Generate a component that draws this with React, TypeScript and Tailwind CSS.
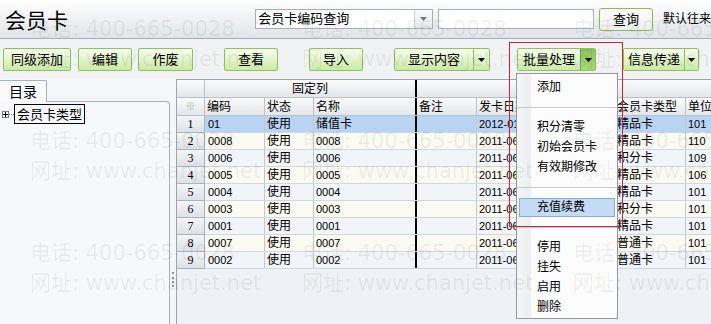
import React from "react";

const UI = "font-['Liberation_Sans','Noto_Sans_CJK_SC',sans-serif]";

const rows = [
  ["1", "01", "使用", "储值卡", "", "2012-01-10", "精品卡", "101"],
  ["2", "0008", "使用", "0008", "", "2011-06-01", "精品卡", "110"],
  ["3", "0006", "使用", "0006", "", "2011-06-01", "积分卡", "109"],
  ["4", "0005", "使用", "0005", "", "2011-06-01", "精品卡", "106"],
  ["5", "0004", "使用", "0004", "", "2011-06-01", "精品卡", "101"],
  ["6", "0003", "使用", "0003", "", "2011-06-01", "积分卡", "101"],
  ["7", "0001", "使用", "0001", "", "2011-06-01", "精品卡", "101"],
  ["8", "0007", "使用", "0007", "", "2011-06-01", "普通卡", "101"],
  ["9", "0002", "使用", "0002", "", "2011-06-01", "普通卡", "101"],
];

function Tri({ color = "#000" }: { color?: string }) {
  return (
    <svg width="7" height="4" viewBox="0 0 7 4">
      <polygon points="0,0 7,0 3.5,4" fill={color} />
    </svg>
  );
}

function GBtn({ children, cls }: { children: React.ReactNode; cls: string }) {
  return (
    <div
      className={
        "h-[23px] flex items-center justify-center rounded-[2px] border border-[#8cc25f] bg-linear-to-b from-[#f8fdf1] to-[#cbeaa2] text-[13px] leading-none " +
        cls
      }
    >
      {children}
    </div>
  );
}

function SplitBtn({
  label,
  mainW,
  arrowW,
  ml,
  pressed,
}: {
  label: string;
  mainW: string;
  arrowW: string;
  ml: string;
  pressed?: boolean;
}) {
  return (
    <div className={"flex h-[23px] rounded-[2px] border border-[#8cc25f] text-[13px] leading-none " + ml}>
      <div className={"flex items-center justify-center bg-linear-to-b from-[#f8fdf1] to-[#cbeaa2] " + mainW}>{label}</div>
      {pressed ? (
        <div className={"flex items-center justify-center border-l border-[#6fa845] bg-linear-to-b from-[#8cc45a] to-[#a9d87a] " + arrowW}>
          <Tri />
        </div>
      ) : (
        <div className={"flex items-center justify-center border-l border-[#8cc25f] bg-linear-to-b from-[#f8fdf1] to-[#cbeaa2] " + arrowW}>
          <Tri />
        </div>
      )}
    </div>
  );
}

function MenuItem({ children }: { children: React.ReactNode }) {
  return <div className="h-[20px] flex items-center pl-[20px] text-[12px] leading-none">{children}</div>;
}

function MenuSep() {
  return (
    <div className="h-[20px] flex items-center">
      <div className="h-px w-full bg-[#c9c9c9]" />
    </div>
  );
}

function Watermark() {
  const cell = (
    <div className="h-[112px] flex flex-col">
      <div className="h-[30px] leading-[30px] whitespace-nowrap">电话: 400-665-0028</div>
      <div className="h-[30px] leading-[30px] whitespace-nowrap">网址: www.chanjet.net</div>
    </div>
  );
  return (
    <div className="absolute inset-0 pointer-events-none pl-[30px] pt-[14px] grid grid-cols-[272px_271px_271px] text-[21px] text-black/[0.065] font-['DejaVu_Sans','Noto_Sans_CJK_SC',sans-serif]">
      {cell}
      {cell}
      {cell}
      {cell}
      {cell}
      {cell}
      {cell}
      {cell}
      {cell}
    </div>
  );
}

export default function App() {
  return (
    <div className={"relative w-[711px] h-[324px] overflow-hidden bg-[#f4f6f8] text-black flex flex-col " + UI}>
      {/* Title bar */}
      <div className="h-[39px] shrink-0 flex items-center border-b border-[#a3afba] bg-linear-to-b from-white to-[#e0e4e8]">
        <div className="pl-[5px] w-[256px] text-[21px] leading-none font-['Noto_Sans_CJK_SC',sans-serif]">会员卡</div>
        <div className="flex h-[20px] w-[178px] border border-[#a7aeb6] bg-white">
          <div className="flex-1 text-[13px] leading-[18px] pl-[2px]">会员卡编码查询</div>
          <div className="w-[18px] border-l border-[#cfd3d8] bg-linear-to-b from-[#fbfbfb] to-[#e5e7e9] flex items-center justify-center">
            <Tri color="#777" />
          </div>
        </div>
        <div className="ml-[5px] h-[20px] w-[157px] border border-[#a7aeb6] bg-white" />
        <div className="ml-[5px] h-[23px] w-[54px] rounded-[3px] border border-[#86bd5b] bg-linear-to-b from-white to-[#eceee9] flex items-center justify-center text-[13px] leading-none">
          查询
        </div>
        <div className="ml-[10px] text-[12px] whitespace-nowrap">默认往来</div>
      </div>

      {/* Toolbar */}
      <div className="h-[40px] shrink-0 flex items-start pt-[9px] bg-[#f1f2f4]">
        <GBtn cls="w-[68px] ml-[3px]">同级添加</GBtn>
        <GBtn cls="w-[54px] ml-[7px]">编辑</GBtn>
        <GBtn cls="w-[55px] ml-[6px]">作废</GBtn>
        <GBtn cls="w-[54px] ml-[31px]">查看</GBtn>
        <GBtn cls="w-[54px] ml-[31px]">导入</GBtn>
        <SplitBtn label="显示内容" mainW="w-[78px]" arrowW="w-[16px]" ml="ml-[31px]" />
        <SplitBtn label="批量处理" mainW="w-[62px]" arrowW="w-[15px]" ml="ml-[27px]" pressed />
        <SplitBtn label="信息传递" mainW="w-[60px]" arrowW="w-[14px]" ml="ml-[27px]" />
      </div>

      {/* Content */}
      <div className="flex flex-1 min-h-0">
        {/* Left panel */}
        <div className="w-[170px] shrink-0 flex flex-col pt-[1px]">
          <div className="relative z-10 w-[47px] h-[22px] -mb-px border-t border-r border-[#a9b1ba] rounded-tr-[2px] bg-[#f9fafb] flex items-center justify-center text-[14px] leading-none">
            目录
          </div>
          <div className="flex-1 border-t border-r border-[#a9b1ba] rounded-tr-[4px] bg-[#f7f8fa] pt-[2px]">
            <div className="flex items-center h-[20px]">
              <div className="ml-[2px] w-[7px] h-[7px] border border-[#7d7d7d] bg-white flex items-center justify-center relative">
                <div className="absolute w-[5px] h-px bg-black" />
                <div className="absolute w-px h-[5px] bg-black" />
              </div>
              <div className="w-[5px] border-t border-dotted border-[#888]" />
              <div className="h-[20px] border border-black px-[2px] flex items-center text-[13px] leading-none">会员卡类型</div>
            </div>
          </div>
        </div>

        {/* Splitter */}
        <div className="w-[6px] shrink-0 flex flex-col items-center pt-[193px]">
          <div className="h-[15px] border-l-2 border-dotted border-[#8a9097]" />
        </div>

        {/* Grid */}
        <div className="flex-1 border-l border-t border-[#9ca5ae] bg-[#eef1f5] flex flex-col text-[12px] leading-none">
          {/* header row 1 */}
          <div className="h-[18px] flex border-b border-[#b9c0c8] bg-linear-to-b from-[#fbfbfc] to-[#e3e6ea]">
            <div className="w-[28px] border-r border-[#b9c0c8]" />
            <div className="w-[212px] border-r-2 border-black flex items-center justify-center">固定列</div>
            <div className="flex-1" />
          </div>
          {/* header row 2 */}
          <div className="h-[18px] flex border-b border-[#b9c0c8] bg-linear-to-b from-[#fbfbfc] to-[#e3e6ea]">
            <div className="w-[28px] border-r border-[#b9c0c8] flex items-center justify-center text-[#aaa] text-[10px]">※</div>
            <div className="w-[60px] border-r border-[#b9c0c8] flex items-center pl-[2px]">编码</div>
            <div className="w-[49px] border-r border-[#b9c0c8] flex items-center pl-[2px]">状态</div>
            <div className="w-[103px] border-r-2 border-black flex items-center pl-[2px]">名称</div>
            <div className="w-[60px] border-r border-[#b9c0c8] flex items-center pl-[2px]">备注</div>
            <div className="w-[138px] border-r border-[#b9c0c8] flex items-center pl-[2px] whitespace-nowrap">发卡日期</div>
            <div className="w-[71px] border-r border-[#b9c0c8] flex items-center pl-[2px] whitespace-nowrap">会员卡类型</div>
            <div className="flex-1 flex items-center pl-[2px] whitespace-nowrap">单位</div>
          </div>
          {rows.map((r, i) => {
            const bg = i === 0 ? "bg-[#b9d4f3]" : i % 2 === 1 ? "bg-[#fbfaf1]" : "bg-[#f1f4f9]";
            return (
              <div key={r[0]} className="h-[17px] flex">
                <div className="w-[28px] border-r border-b border-[#aab2bb] bg-linear-to-b from-[#f3f5f7] to-[#dde1e6] flex items-center justify-center text-[12px] font-['Liberation_Serif',serif]">
                  {r[0]}
                </div>
                <div className={"flex flex-1 border-b border-[#d3d8de] " + bg}>
                  <div className="w-[60px] border-r border-[#c3c9d0] flex items-center pl-[3px] text-[11px]">{r[1]}</div>
                  <div className="w-[49px] border-r border-[#c3c9d0] flex items-center pl-[2px]">{r[2]}</div>
                  <div className={"w-[103px] border-r-2 border-black flex items-center pl-[2px] " + (i === 0 ? "text-[12px]" : "text-[11px]")}>{r[3]}</div>
                  <div className="w-[60px] border-r border-[#c3c9d0]" />
                  <div className="w-[138px] border-r border-[#c3c9d0] flex items-center pl-[2px] text-[11px] whitespace-nowrap">{r[5]}</div>
                  <div className="w-[71px] border-r border-[#c3c9d0] flex items-center pl-[2px]">{r[6]}</div>
                  <div className="flex-1 flex items-center pl-[2px] text-[11px]">{r[7]}</div>
                </div>
              </div>
            );
          })}
        </div>
      </div>

      {/* Dropdown menu */}
      <div className="absolute left-[516px] top-[73px] w-[102px] h-[246px] border border-[#979797] bg-[#fcfcfc] pt-[3px]">
        <div className="absolute left-0 top-0 bottom-0 w-[14px] bg-linear-to-r from-[#f4f5f6] to-[#eceef0]" />
        <div className="relative">
          <MenuItem>添加</MenuItem>
          <MenuSep />
          <MenuItem>积分清零</MenuItem>
          <MenuItem>初始会员卡</MenuItem>
          <MenuItem>有效期修改</MenuItem>
          <MenuSep />
          <div className="h-[20px] flex items-center">
            <div className="mx-[2px] w-full h-[19px] border border-[#86acd9] bg-[#c4dbf6] flex items-center pl-[17px] text-[12px] leading-none">
              充值续费
            </div>
          </div>
          <MenuSep />
          <MenuItem>停用</MenuItem>
          <MenuItem>挂失</MenuItem>
          <MenuItem>启用</MenuItem>
          <MenuItem>删除</MenuItem>
        </div>
      </div>

      {/* Red highlight frame */}
      <div className="absolute left-[509px] top-[42px] w-[114px] h-[185px] border border-[#d3232e] pointer-events-none" />

      <Watermark />
    </div>
  );
}
